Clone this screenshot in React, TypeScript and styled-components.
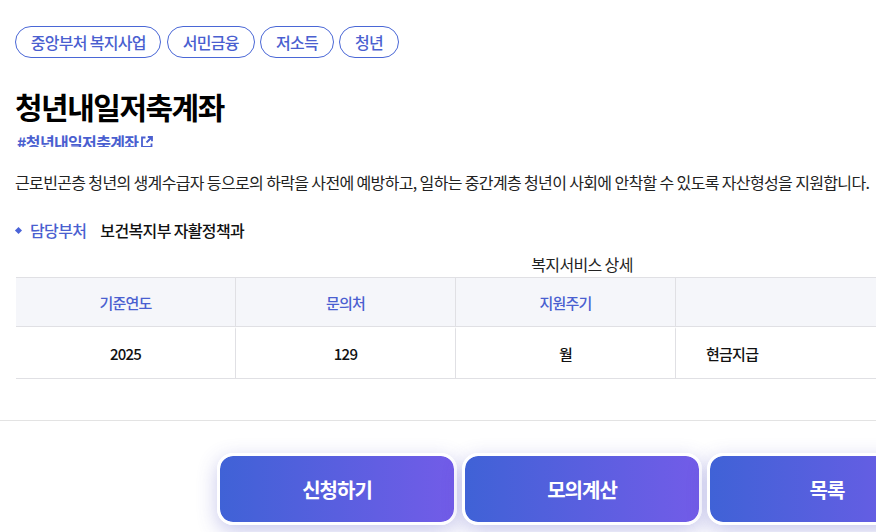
import React from "react";
import styled, { createGlobalStyle } from "styled-components";

const Global = createGlobalStyle`
  html, body { margin: 0; padding: 0; background: #fff; }
  body { font-family: "Noto Sans CJK KR", "Noto Sans", sans-serif; color: #222; overflow: hidden; letter-spacing: -0.04em; }
  #root { width: 876px; height: 532px; overflow: hidden; }
`;
const Page = styled.main`
  width: 1164px;
  padding-top: 26px;
`;
const Head = styled.section`
  padding: 0 16px 0 15px;
  display: flex;
  flex-direction: column;
`;
const Tags = styled.ul`
  display: flex;
  gap: 5.5px;
  margin: 0;
  padding: 0;
  list-style: none;
`;
const Tag = styled.li`
  box-sizing: border-box;
  height: 32px;
  padding: 0 14.8px;
  display: flex;
  align-items: center;
  border: 1px solid #4a67d6;
  border-radius: 16px;
  font-size: 16px;
  font-weight: 500;
  letter-spacing: -0.045em;
  color: #4a5fd0;
`;
const Title = styled.h1`
  margin: 27px 0 0;
  font-size: 30px;
  line-height: 42px;
  font-weight: 700;
  letter-spacing: -0.05em;
  color: #000;
`;
const HashClip = styled.div`
  height: 16px;
  margin: 4px 0 0 2px;
  overflow: hidden;
`;
const Hash = styled.a`
  display: flex;
  align-items: center;
  gap: 3px;
  margin-top: 1px;
  font-size: 16px;
  line-height: 20px;
  font-weight: 700;
  color: #4a5fd0;
`;
const Desc = styled.p`
  margin: 23px 0 0;
  font-size: 16px;
  line-height: 24px;
  color: #222;
  white-space: nowrap;
`;
const Dept = styled.div`
  display: flex;
  align-items: center;
  margin: 24px 0 0 1px;
  font-size: 16px;
  line-height: 24px;
  font-weight: 500;
`;
const Diamond = styled.i`
  width: 5px;
  height: 5px;
  margin: 0 9px 0 0;
  background: #4a63d8;
  transform: rotate(45deg);
`;
const DeptLabel = styled.span`
  color: #4a5fd0;
  margin-right: 14px;
`;
const DeptValue = styled.span`
  color: #111;
`;
const TableWrap = styled.div`
  padding: 0 16px;
  margin-top: 10px;
`;
const Table = styled.table`
  width: 1132px;
  table-layout: fixed;
  border-collapse: separate;
  border-spacing: 0;
  border-top: 1px solid #e0e0e4;
`;
const Caption = styled.caption`
  font-size: 16px;
  line-height: 25px;
  color: #222;
`;
const Col = styled.col<{ $w?: number }>`
  width: ${(p) => (p.$w ? `${p.$w}px` : "auto")};
`;
const Th = styled.th`
  height: 48px;
  padding: 0;
  background: #f5f6fa;
  border-right: 1px solid #e0e0e4;
  border-bottom: 1px solid #e0e0e4;
  font-size: 15px;
  font-weight: 500;
  letter-spacing: -0.05em;
  color: #4a5fd0;
  &:last-child { border-right: 0; }
`;
const Td = styled.td<{ $left?: boolean }>`
  height: 49px;
  padding: ${(p) => (p.$left ? "0 0 0 30px" : "0")};
  border-top: 2px solid #fff;
  border-right: 1px solid #e0e0e4;
  border-bottom: 1px solid #e0e0e4;
  text-align: ${(p) => (p.$left ? "left" : "center")};
  font-size: 15px;
  font-weight: 500;
  letter-spacing: -0.05em;
  color: #111;
  &:last-child { border-right: 0; }
`;
const Divider = styled.hr`
  margin: 41px 0 0;
  border: 0;
  border-top: 1px solid #e3e3e3;
`;
const Actions = styled.div`
  display: flex;
  justify-content: center;
  gap: 5px;
  margin-top: 32px;
`;
const ActionButton = styled.button`
  box-sizing: border-box;
  width: 240px;
  height: 72px;
  border: 3px solid #fff;
  border-radius: 16px;
  background: linear-gradient(90deg, #3f62d6 0%, #735ce8 100%);
  background-origin: border-box;
  background-clip: padding-box;
  box-shadow: 0 6px 20px rgba(70, 70, 190, 0.3);
  color: #fff;
  font-family: inherit;
  font-size: 20px;
  font-weight: 700;
  letter-spacing: -0.05em;
`;

const ExternalIcon = () => (
  <svg width="12" height="12" viewBox="0 0 12 12" fill="none" stroke="#4a5fd0" strokeWidth="1.8">
    <path d="M4.5 1.5H1v9.5h9.5V7.5" />
    <path d="M5.5 6.5l5.5-5.5M6.8 1H11v4.2" />
  </svg>
);

export default function App() {
  return (
    <Page>
      <Global />
      <Head>
        <Tags>
          <Tag>중앙부처 복지사업</Tag>
          <Tag>서민금융</Tag>
          <Tag>저소득</Tag>
          <Tag>청년</Tag>
        </Tags>
        <Title>청년내일저축계좌</Title>
        <HashClip>
          <Hash>
            #청년내일저축계좌
            <ExternalIcon />
          </Hash>
        </HashClip>
        <Desc>
          근로빈곤층 청년의 생계수급자 등으로의 하락을 사전에 예방하고, 일하는 중간계층 청년이 사회에 안착할 수 있도록 자산형성을 지원합니다.
        </Desc>
        <Dept>
          <Diamond />
          <DeptLabel>담당부처</DeptLabel>
          <DeptValue>보건복지부 자활정책과</DeptValue>
        </Dept>
      </Head>
      <TableWrap>
        <Table>
          <Caption>복지서비스 상세</Caption>
          <colgroup>
            <Col $w={220} />
            <Col $w={220} />
            <Col $w={220} />
            <Col />
          </colgroup>
          <thead>
            <tr>
              <Th>기준연도</Th>
              <Th>문의처</Th>
              <Th>지원주기</Th>
              <Th />
            </tr>
          </thead>
          <tbody>
            <tr>
              <Td>2025</Td>
              <Td>129</Td>
              <Td>월</Td>
              <Td $left>현금지급</Td>
            </tr>
          </tbody>
        </Table>
      </TableWrap>
      <Divider />
      <Actions>
        <ActionButton>신청하기</ActionButton>
        <ActionButton>모의계산</ActionButton>
        <ActionButton>목록</ActionButton>
      </Actions>
    </Page>
  );
}
